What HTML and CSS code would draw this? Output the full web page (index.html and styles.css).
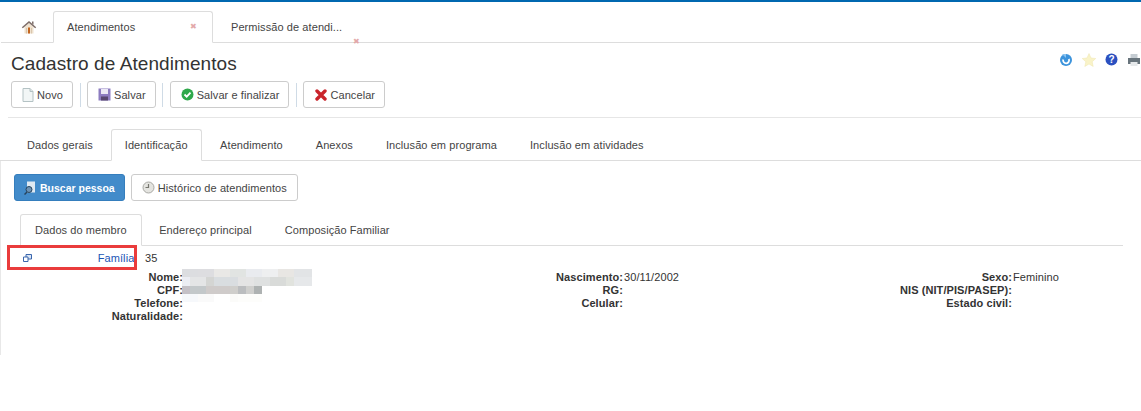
FILE: index.html
```html
<!DOCTYPE html>
<html lang="en">
<head>
  <meta charset="UTF-8">
  <title>Cadastro de Atendimentos</title>
  <link rel="stylesheet" href="styles.css">
</head>
<body>
  <div class="topline"></div>

  <div class="tabs main-tabs">
    <a class="tab home-tab">
      <svg width="16" height="14" viewBox="0 0 16 14"><path d="M3.500 7 8 3l4.500 4v6.500h-9z" fill="#efe2cf"/><path d="M5 8h1v5.500H5zM10 8h1v5.500h-1z" fill="#d9c6ad"/><path d="M7 7.500h2v6H7z" fill="#c4651f"/><path d="M8 1 .8 7.300l1 .9L8 3l6.200 5.200 1-.9z" fill="#7d6d68"/><path d="M11 1.500h1.500v3.200L11 3.500z" fill="#7d6d68"/></svg>
    </a>
    <a class="tab active first-tab">Atendimentos<span class="tab-x">✖</span></a>
    <a class="tab second-tab">Permissão de atendi...<span class="tab-x low">✖</span></a>
  </div>

  <div class="title-row">
    <h1>Cadastro de Atendimentos</h1>
    <div class="tools">
      <svg width="14" height="14" viewBox="0 0 14 14"><circle cx="7" cy="7" r="6" fill="#3d94dc"/><path d="M4.200 6.500a3 3 0 1 0 5.600-.5" fill="none" stroke="#fff" stroke-width="1.800"/><path d="M3 1h4v4z" fill="#8cc4f0"/></svg>
      <svg width="14" height="14" viewBox="0 0 14 14"><path d="m7 .5 2 4.500 4.800.5-3.600 3.200 1 4.800L7 11l-4.200 2.500 1-4.800L.2 5.500 5 5z" fill="#f9f3c8" stroke="#efe6b0" stroke-width=".5"/></svg>
      <svg width="13" height="13" viewBox="0 0 13 13"><circle cx="6.500" cy="6.500" r="6" fill="#2b50c0"/><text x="6.500" y="10" class="help-mark">?</text></svg>
      <svg width="14" height="14" viewBox="0 0 14 14"><path d="M3.500 1h7v4h-7z" fill="#c5ccd2"/><path d="M1 5h12v6H1z" fill="#68747c"/><path d="M3.500 9h7v4h-7z" fill="#e6e9eb"/></svg>
    </div>
  </div>

  <div class="toolbar">
    <button class="btn trim">
      <svg width="12" height="14" viewBox="0 0 12 14"><path d="M1 .5h7l3 3v10H1z" fill="#f2f6f6" stroke="#b4c2c4"/><path d="M8 .5v3h3" fill="#dde5e6" stroke="#b4c2c4"/></svg>
      Novo
    </button>
    <span class="sep"></span>
    <button class="btn trim">
      <svg width="13" height="13" viewBox="0 0 13 13"><path d="M.5.500h12v12H.5z" fill="#8d7cc0"/><path d="M3 1h7v5H3z" fill="#ece9f5"/><path d="M3 8.500h7v4H3z" fill="#57476f"/></svg>
      Salvar
    </button>
    <span class="sep"></span>
    <button class="btn trim">
      <svg width="13" height="13" viewBox="0 0 13 13"><circle cx="6.500" cy="6.500" r="6" fill="#2fa84a"/><path d="m3.500 6.500 2.200 2.200 3.800-4" fill="none" stroke="#fff" stroke-width="1.800"/></svg>
      Salvar e finalizar
    </button>
    <span class="sep"></span>
    <button class="btn cancel">
      <svg width="12" height="12" viewBox="0 0 12 12"><path d="M2 2l8 8M10 2l-8 8" stroke="#c9242b" stroke-width="3.400" stroke-linecap="round"/></svg>
      Cancelar
    </button>
  </div>

  <div class="rule"></div>

  <div class="tabs section-tabs">
    <a class="tab">Dados gerais</a>
    <a class="tab active">Identificação</a>
    <a class="tab">Atendimento</a>
    <a class="tab">Anexos</a>
    <a class="tab">Inclusão em programa</a>
    <a class="tab">Inclusão em atividades</a>
  </div>

  <div class="panel">
    <div class="actions">
      <button class="btn primary">
        <svg width="13" height="14" viewBox="0 0 13 14"><path d="M3 .5h8v11H3z" fill="#dfe9f2"/><circle cx="5" cy="8.500" r="3" fill="#6d93b5" stroke="#26445f"/><path d="M3 11 .5 13.500" stroke="#26445f" stroke-width="1.500"/></svg>
        Buscar pessoa
      </button>
      <button class="btn">
        <svg width="13" height="13" viewBox="0 0 13 13"><circle cx="6.500" cy="6.500" r="5.500" fill="#e4e4e0" stroke="#a8a8a4"/><path d="M6.500 3v3.500H3.500" fill="none" stroke="#77776f" stroke-width="1.200"/></svg>
        Histórico de atendimentos
      </button>
    </div>

    <div class="tabs member-tabs">
      <a class="tab active">Dados do membro</a>
      <a class="tab">Endereço principal</a>
      <a class="tab">Composição Familiar</a>
    </div>

    <div class="family-row">
      <svg width="9" height="8" viewBox="0 0 9 8"><path d="M3 .5h5.500v4.500H3z" fill="#dbe6f5" stroke="#3a66ad"/><path d="M.5 3H5v4.500H.5z" fill="#fff" stroke="#3a66ad"/></svg>
      <a class="family-link">Família:</a>
      <span class="family-value">35</span>
      <span class="highlight"></span>
    </div>

    <div class="fields">
      <span class="label">Nome:</span><span class="value"><i class="blur"></i></span>
      <span class="label">Nascimento:</span><span class="value">30/11/2002</span>
      <span class="label">Sexo:</span><span class="value">Feminino</span>

      <span class="label">CPF:</span><span class="value"></span>
      <span class="label">RG:</span><span class="value"></span>
      <span class="label">NIS (NIT/PIS/PASEP):</span><span class="value"></span>

      <span class="label">Telefone:</span><span class="value"></span>
      <span class="label">Celular:</span><span class="value"></span>
      <span class="label">Estado civil:</span><span class="value"></span>

      <span class="label">Naturalidade:</span><span class="value"></span>
    </div>
  </div>
</body>
</html>
```

FILE: styles.css
```css
body {
  margin: 0;
  background-color: #fff;
  font-family: 'Liberation Sans', Arial, sans-serif;
  font-size: 11px;
  letter-spacing: .08px;
  color: #333;
  overflow: hidden;
}

.topline {
  height: 2px;
  background-color: #0068b0;
}

.tabs {
  display: flex;
  align-items: flex-end;
  border-bottom: 1px solid #ddd;
}

.tab {
  display: block;
  box-sizing: border-box;
  height: 32px;
  line-height: 30px;
  margin-bottom: -1px;
  border: 1px solid transparent;
  border-radius: 3px 3px 0 0;
  color: #444;
  white-space: nowrap;
}

.tab.active {
  background-color: #fff;
  border-color: #ddd;
  border-bottom-color: #fff;
}

.main-tabs {
  height: 40px;
  padding-left: 8px;
  margin-left: 1px;
}

.home-tab {
  display: flex;
  align-items: center;
  width: 44px;
  padding-left: 11px;
}

.first-tab {
  position: relative;
  width: 160px;
  padding-left: 13px;
}

.second-tab {
  position: relative;
  width: 160px;
  padding-left: 17px;
}

.tab-x {
  position: absolute;
  left: 136px;
  top: 0;
  font-size: 8px;
  color: #e3a9a9;
}

.tab-x.low {
  top: 15px;
  left: 139px;
}

.title-row {
  display: flex;
  justify-content: space-between;
  padding: 10px 0 0 11px;
}

h1 {
  margin: 0;
  font-size: 19px;
  font-weight: normal;
  line-height: 22px;
  color: #333;
}

.tools {
  display: flex;
  gap: 9px;
  height: 14px;
}

.help-mark {
  font-size: 10px;
  font-weight: bold;
  fill: #fff;
  text-anchor: middle;
}

.toolbar {
  display: flex;
  align-items: center;
  gap: 6.5px;
  padding: 6px 0 0 11px;
}

.sep {
  width: 1px;
  height: 24px;
  background-color: #cfdbe6;
}

.btn {
  display: inline-flex;
  align-items: center;
  gap: 3px;
  box-sizing: border-box;
  height: 27px;
  padding: 0 10px;
  background-color: #fff;
  border: 1px solid #ccc;
  border-radius: 3px;
  font-family: 'Liberation Sans', Arial, sans-serif;
  font-size: 11px;
  letter-spacing: .08px;
  color: #444;
}

.btn.trim {
  padding-right: 9px;
}

.btn.cancel {
  padding: 0 9px 0 11px;
}

.btn.primary {
  padding: 0 9px;
  background-color: #428bca;
  border-color: #357ebd;
  color: #fff;
  font-size: 10.5px;
  font-weight: bold;
  letter-spacing: 0;
}

.rule {
  height: 1px;
  margin: 9px 0 0 8px;
  background-color: #e6e6e6;
}

.section-tabs {
  margin-top: 11px;
  padding-left: 10.5px;
}

.section-tabs .tab {
  padding: 0 15.5px;
}

.section-tabs .tab.active {
  margin: 0 2px -1px 1.5px;
  padding: 0 13px;
}

.panel {
  height: 181px;
  margin-right: 18px;
  padding-top: 13px;
  border-left: 1px solid #e8e8e8;
}

.actions {
  display: flex;
  gap: 6px;
  padding-left: 13px;
}

.member-tabs {
  margin-top: 13px;
  padding-left: 6px;
  margin-left: 13px;
}

.member-tabs .tab {
  padding: 0 15.5px;
}

.member-tabs .tab.active {
  margin-right: 1px;
  padding: 0 14px;
}

.family-row {
  position: relative;
  display: flex;
  align-items: center;
  height: 24px;
  padding-left: 22px;
}

.family-link {
  width: 105.5px;
  color: #1a55b5;
  text-align: right;
  white-space: nowrap;
}

.family-value {
  margin-left: 7.5px;
}

.highlight {
  position: absolute;
  left: 6px;
  top: -1px;
  width: 124px;
  height: 19px;
  border: 3px solid #ea3c3c;
}

.fields {
  display: grid;
  grid-template-columns: 182px 373px 67px 276px 113px 1fr;
  grid-auto-rows: 13px;
  margin-top: 1px;
  line-height: 13px;
}

.label {
  font-weight: bold;
  text-align: right;
  white-space: nowrap;
}

.value {
  position: relative;
  padding-left: 1px;
}

/* the blurred name and CPF, one gradient per row of 8px cells */
.blur {
  position: absolute;
  left: -1px;
  top: -2px;
  display: block;
  width: 130px;
  height: 33px;
  background-repeat: no-repeat;
  background-size: 130px 8px, 130px 9px, 80px 8px, 80px 8px;
  background-position: 0 0, 0 8px, 0 17px, 0 25px;
  background-image:
    linear-gradient(90deg, #dcdde0 0 16px, #dddde0 0 32px, #e9e8e6 0 48px, #e1e4e2 0 64px, #e9ebef 0 80px, #eeeff0 0 96px, #e8e6e3 0 112px, #e2e4e6 0 128px, #e2e4e6 0),
    linear-gradient(90deg, #ecedf3 0 8px, #e4e5e6 0 24px, #d4d5d3 0 32px, #d9dde0 0 56px, #e4e4e4 0 72px, #dfe1e1 0 88px, #d9dbd9 0 104px, #e1e3de 0 112px, #e6e8ea 0 130px),
    linear-gradient(90deg, #c4c0c6 0 8px, #c3c8ca 0 24px, #cfcbca 0 48px, #cfcecb 0 56px, #bbbdbf 0 64px, #cfcfcd 0 72px, #aeb2b2 0 80px),
    linear-gradient(90deg, #f6f8fb 0 16px, #fafafa 0 32px, #fff 0 48px, #fbfbf9 0 56px, #fdfdfb 0 80px);
}
```
